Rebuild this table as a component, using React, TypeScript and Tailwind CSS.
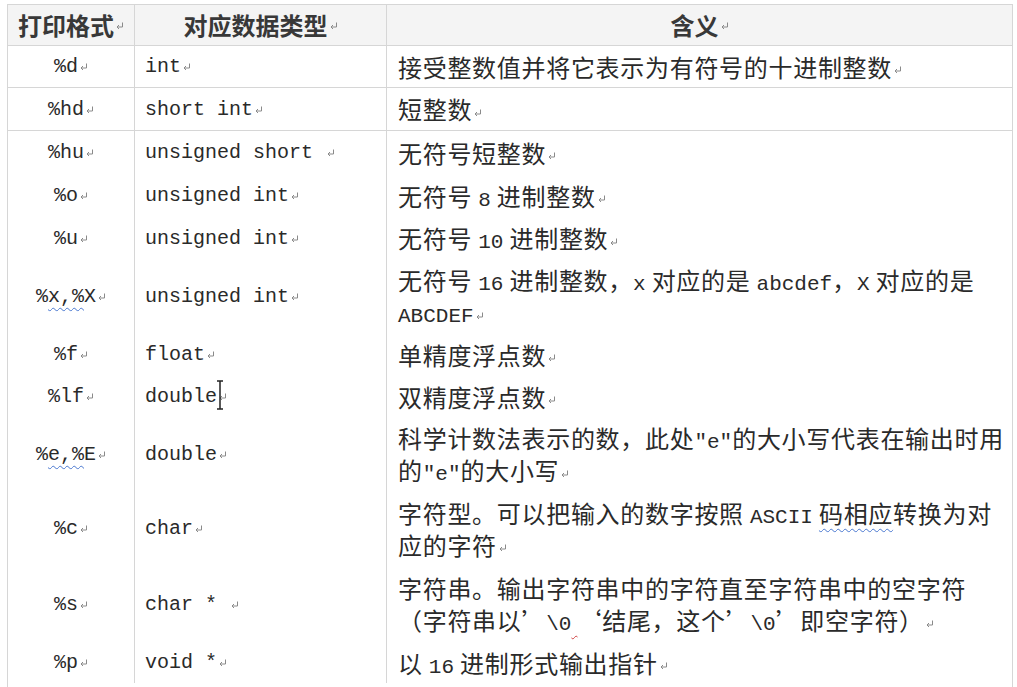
import React from "react";

const PM = () => (
  <svg width="9" height="9" viewBox="0 0 9 9" className="inline-block ml-[1px] align-middle">
    <path d="M7.5 1.5 V6 H2" stroke="#8a8a8a" fill="none" strokeWidth="1" />
    <path d="M4 4 L2 6 L4 8" stroke="#8a8a8a" fill="none" strokeWidth="1" />
  </svg>
);

const M = ({ children }: { children: React.ReactNode }) => (
  <span className="font-['Liberation_Mono',monospace] text-[21px] leading-none tracking-normal">{children}</span>
);

const WB = ({ children }: { children: React.ReactNode }) => (
  <span className="underline decoration-wavy decoration-[#4a78d0] decoration-1 underline-offset-[5px]">{children}</span>
);
const WR = ({ children }: { children: React.ReactNode }) => (
  <span className="underline decoration-wavy decoration-[#d04040] decoration-1 underline-offset-[5px]">{children}</span>
);

type Row = {
  h: string;
  fmt: React.ReactNode;
  type: React.ReactNode;
  desc: React.ReactNode;
  border?: boolean;
};

const rows: Row[] = [
  { h: "h-[42px]", fmt: <>%d</>, type: <>int</>, desc: <>接受整数值并将它表示为有符号的十进制整数</>, border: true },
  { h: "h-[43px]", fmt: <>%hd</>, type: <>short int</>, desc: <>短整数</>, border: true },
  { h: "h-[43px]", fmt: <>%hu</>, type: <>unsigned short </>, desc: <>无符号短整数</> },
  { h: "h-[43px]", fmt: <>%o</>, type: <>unsigned int</>, desc: <>无符号 <M>8</M> 进制整数</> },
  { h: "h-[42px]", fmt: <>%u</>, type: <>unsigned int</>, desc: <>无符号 <M>10</M> 进制整数</> },
  {
    h: "h-[74px]",
    fmt: <>%<WB>x,%</WB>X</>,
    type: <>unsigned int</>,
    desc: (
      <>
        无符号 <M>16</M> 进制整数，<M>x</M> 对应的是 <M>abcdef</M>，<M>X</M> 对应的是
        <br />
        <M>ABCDEF</M>
      </>
    ),
  },
  { h: "h-[43px]", fmt: <>%f</>, type: <>float</>, desc: <>单精度浮点数</> },
  {
    h: "h-[41px]",
    fmt: <>%lf</>,
    type: (
      <>
        double
        <span className="relative inline-block w-0">
          <svg width="10" height="30" viewBox="0 0 10 30" className="absolute left-[-2px] top-[-22px]">
            <path d="M2 1 H8 M5 1 V29 M2 29 H8" stroke="#222" strokeWidth="1.5" fill="none" />
          </svg>
        </span>
      </>
    ),
    desc: <>双精度浮点数</>,
  },
  {
    h: "h-[74px]",
    fmt: <>%<WB>e,%</WB>E</>,
    type: <>double</>,
    desc: (
      <>
        科学计数法表示的数，此处<M>″e″</M>的大小写代表在输出时用
        <br />
        的<M>″e″</M>的大小写
      </>
    ),
  },
  {
    h: "h-[75px]",
    fmt: <>%c</>,
    type: <>char</>,
    desc: (
      <>
        字符型。可以把输入的数字按照 <M>ASCII</M> <WB>码相应</WB>转换为对
        <br />
        应的字符
      </>
    ),
  },
  {
    h: "h-[76px]",
    fmt: <>%s</>,
    type: <>char * </>,
    desc: (
      <>
        字符串。输出字符串中的字符直至字符串中的空字符
        <br />
        （字符串以’<M>\0</M><WR>&nbsp;</WR>‘结尾，这个’<M>\0</M>’即空字符）
      </>
    ),
  },
  { h: "h-[41px]", fmt: <>%p</>, type: <>void *</>, desc: <>以 <M>16</M> 进制形式输出指针</> },
];

export default function App() {
  return (
    <div className="w-[1017px] h-[687px] overflow-hidden bg-white pt-[4px] pl-[7px] text-[#2a2a2a]">
      <div className="w-[1006px] border-x border-t border-[#d6d6d6] pb-[10px]">
        <div className="grid grid-cols-[126px_252px_626px] h-[41px] bg-[#f4f4f4] border-b border-[#d6d6d6] font-['Noto_Sans_CJK_SC',sans-serif] text-[24px] font-bold text-[#383838]">
          <div className="flex items-center justify-center">打印格式<PM /></div>
          <div className="flex items-center justify-center border-l border-[#d6d6d6]">对应数据类型<PM /></div>
          <div className="flex items-center justify-center border-l border-[#d6d6d6]">含义<PM /></div>
        </div>
        {rows.map((r, i) => (
          <div
            key={i}
            className={`grid grid-cols-[126px_252px_626px] ${r.h} ${r.border ? "border-b border-[#d6d6d6]" : ""}`}
          >
            <div className="flex items-center justify-center font-['Liberation_Mono',monospace] text-[20px] leading-[31px]">
              <span>{r.fmt}<PM /></span>
            </div>
            <div className="flex items-center pl-[10px] border-l border-[#d6d6d6] font-['Liberation_Mono',monospace] text-[20px] leading-[31px] whitespace-pre">
              <span>{r.type}<PM /></span>
            </div>
            <div className="flex items-center pl-[11px] border-l border-[#d6d6d6] font-['Noto_Sans_CJK_SC',sans-serif] text-[24px] leading-[32px] tracking-[0.7px] whitespace-nowrap">
              <span>{r.desc}<PM /></span>
            </div>
          </div>
        ))}
      </div>
    </div>
  );
}
